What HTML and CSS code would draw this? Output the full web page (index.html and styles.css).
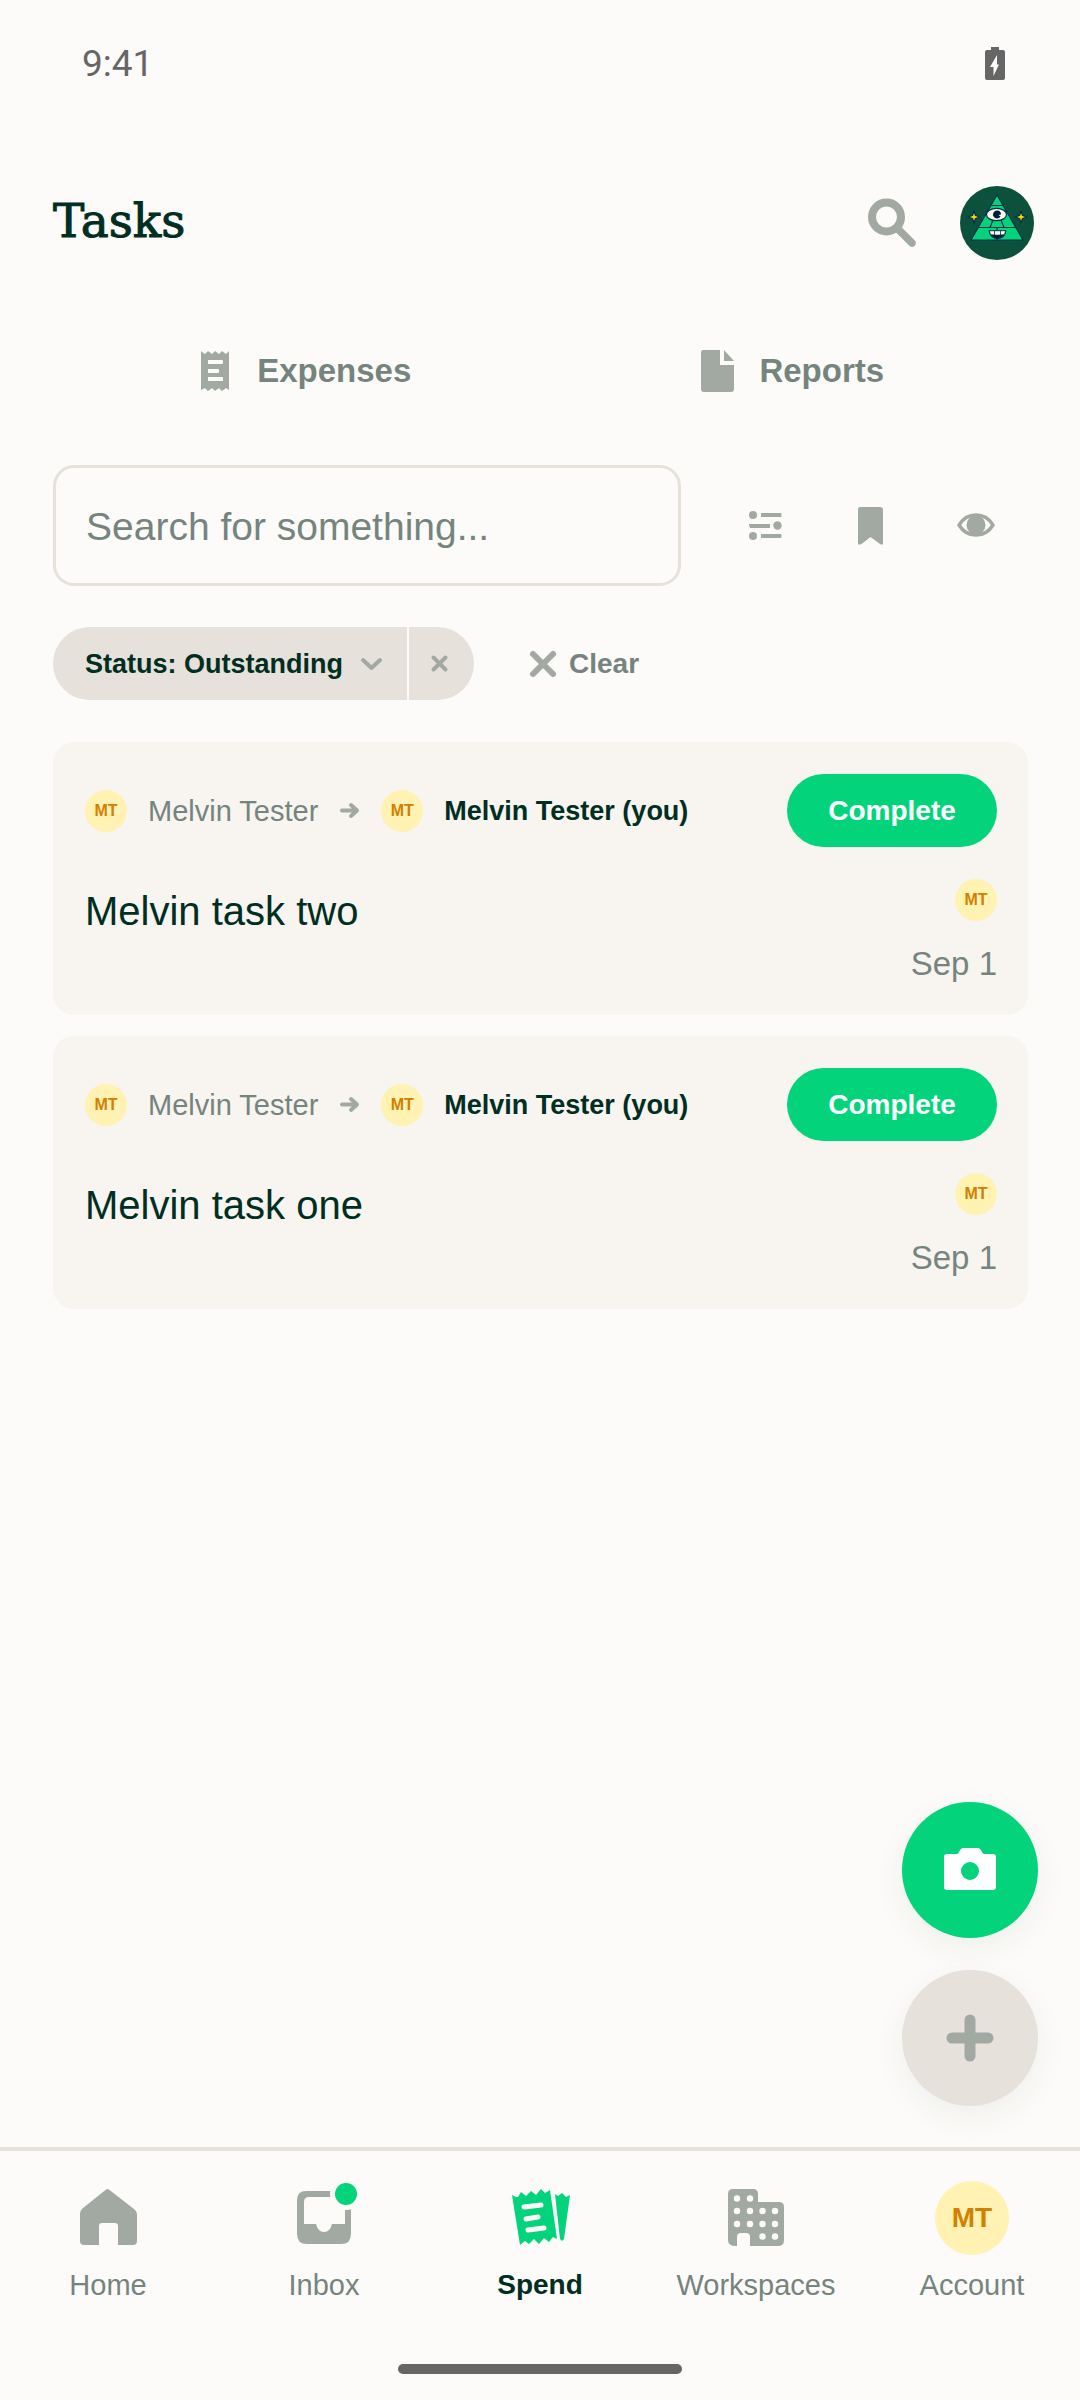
FILE: index.html
```html
<!DOCTYPE html>
<html lang="en">
<head>
<meta charset="utf-8">
<meta name="viewport" content="width=device-width, initial-scale=1">
<title>Tasks</title>
<link rel="stylesheet" href="styles.css">
</head>
<body>
<div class="app">
  <div class="status-bar">
    <span>9:41</span>
    <svg class="battery" width="20" height="34" viewBox="0 0 20 34" aria-hidden="true"><path fill="currentColor" fill-rule="evenodd" d="M6 0h8v3h4q2 0 2 2v26q0 2-2 2H2q-2 0-2-2V5q0-2 2-2h4zM12 8 5 20h3.500v9L14 17.500h-2z"/></svg>
  </div>

  <header class="header">
    <h1>Tasks</h1>
    <div class="header-actions">
      <button class="icon-button" aria-label="Search">
        <svg width="52" height="52" viewBox="0 0 52 52" fill="none" stroke="currentColor"><circle cx="20.500" cy="20" r="14.500" stroke-width="8"/><path d="M31 31 46 46" stroke-width="7.500" stroke-linecap="round"/></svg>
      </button>
      <button class="icon-button" aria-label="Profile">
        <svg width="74" height="74" viewBox="0 0 74 74">
          <circle cx="37" cy="37" r="37" fill="#0b513b"/>
          <g stroke="#002e4d" stroke-linejoin="round">
            <path d="M37 9 63 54H11z" fill="#03d47c" stroke-width="1.200"/>
            <path d="M31.500 19.500h11M19 41.500h36M33 34l-3 7.500M41 34l3 7.500M37 41.500V54" fill="none" stroke-width="1.200"/>
            <ellipse cx="36.500" cy="28.500" rx="10" ry="6.200" fill="#fff8ea" stroke-width="1.200"/>
            <path d="M29 44.500h17q-1 8-8.500 8T29 44.500z" fill="#001e3c" stroke-width="1"/>
            <path d="M29.500 44.800h16l-1 3.800q-7 1-14 0z" fill="#fff8ea" stroke-width=".6"/>
            <path d="M34.500 45v4M40.500 45v4" stroke-width=".8"/>
            <path d="M14 25l1.500 4.500L20 31l-4.500 1.500L14 37l-1.500-4.500L8 31l4.500-1.500zM61 25l1.500 4.500L67 31l-4.500 1.500L61 37l-1.500-4.500L55 31l4.500-1.500z" fill="#fed607" stroke-width="1.200"/>
          </g>
          <path d="M37 24.500a4 4 0 1 0 3.500 6l-2-1.500 2.500-.500a4 4 0 0 0-4-4z" fill="#001e3c"/>
        </svg>
      </button>
    </div>
  </header>

  <nav class="tabs" aria-label="Sections">
    <a href="#expenses" class="tab">
      <svg width="42" height="42" viewBox="0 0 42 42"><path fill="currentColor" fill-rule="evenodd" d="M7 1l1 1 3 2 3-3 4 3 3-3 4 3 3-3 4 3 3-3v39l-3-2-4 3-3-3-4 3-3-3-4 3-3-3-4 2zM14 10v4h14q1 0 1-1v-2q0-1-1-1zM14 19v4h10q1 0 1-1v-2q0-1-1-1zM14 27v4h15v-4z"/></svg>
      <span>Expenses</span>
    </a>
    <a href="#reports" class="tab">
      <svg width="42" height="42" viewBox="0 0 42 42"><path fill="currentColor" d="M7 0h17v15h14v24q0 3-3 3H8q-3 0-3-3V3q0-3 2-3zM28 0l10 11H28z"/></svg>
      <span>Reports</span>
    </a>
  </nav>

  <main class="main">
    <form class="search-row">
      <input class="search" type="text" placeholder="Search for something..." aria-label="Search for something">
      <button type="button" class="tool" aria-label="Filters">
        <svg width="42" height="42" viewBox="0 0 42 42" fill="currentColor"><circle cx="8" cy="10" r="4"/><circle cx="32.500" cy="20.500" r="4.200"/><circle cx="8" cy="31" r="4"/><path d="M16 8h20q1 2 0 4H16zM4 19h21v4H5q-1-2-1-4zM16 29h20q1 2 0 4H16z"/></svg>
      </button>
      <button type="button" class="tool" aria-label="Save search">
        <svg width="42" height="42" viewBox="0 0 42 42" fill="currentColor"><path d="M10 2h20q3 0 3 3v34q-1 1-3 0l-9.500-7-9 7q-3 1-3.500 0V5q0-3 2-3z"/></svg>
      </button>
      <button type="button" class="tool" aria-label="Columns">
        <svg width="42" height="42" viewBox="0 0 42 42"><path d="M4 20Q10 10 21 10T38 20Q32 30 21 30T4 20z" fill="none" stroke="currentColor" stroke-width="3.500" stroke-linejoin="round"/><circle cx="21" cy="20" r="9.500" fill="currentColor"/></svg>
      </button>
    </form>

    <div class="filters">
      <div class="chip">
        <button class="chip-label">Status: Outstanding
          <svg width="21" height="21" viewBox="0 0 21 21" fill="none" stroke="currentColor" stroke-width="4" stroke-linecap="round" stroke-linejoin="round"><path d="M2 7l8.500 8L19 7"/></svg>
        </button>
        <button class="chip-remove" aria-label="Remove filter">
          <svg width="21" height="21" viewBox="0 0 21 21" stroke="currentColor" stroke-width="4" stroke-linecap="round"><path d="M4.500 4.500l12 12M16.500 4.500l-12 12"/></svg>
        </button>
      </div>
      <button class="clear">
        <svg width="32" height="32" viewBox="0 0 32 32" stroke="currentColor" stroke-width="6" stroke-linecap="round"><path d="M6 6l20 20M26 6 6 26"/></svg>
        Clear
      </button>
    </div>

    <ul class="tasks">
      <li class="task">
        <div class="task-head">
          <span class="initials">MT</span>
          <span class="person">Melvin Tester</span>
          <svg class="arrow" width="21" height="21" viewBox="0 0 21 21" fill="none" stroke="currentColor" stroke-width="4" stroke-linecap="round" stroke-linejoin="round"><path d="M3 10.500h14M12 5l6 5.500-6 5.500"/></svg>
          <span class="initials">MT</span>
          <strong class="person">Melvin Tester (you)</strong>
          <button class="complete">Complete</button>
        </div>
        <div class="task-body">
          <h2>Melvin task two</h2>
          <div class="task-meta">
            <span class="initials">MT</span>
            <time>Sep 1</time>
          </div>
        </div>
      </li>
      <li class="task">
        <div class="task-head">
          <span class="initials">MT</span>
          <span class="person">Melvin Tester</span>
          <svg class="arrow" width="21" height="21" viewBox="0 0 21 21" fill="none" stroke="currentColor" stroke-width="4" stroke-linecap="round" stroke-linejoin="round"><path d="M3 10.500h14M12 5l6 5.500-6 5.500"/></svg>
          <span class="initials">MT</span>
          <strong class="person">Melvin Tester (you)</strong>
          <button class="complete">Complete</button>
        </div>
        <div class="task-body">
          <h2>Melvin task one</h2>
          <div class="task-meta">
            <span class="initials">MT</span>
            <time>Sep 1</time>
          </div>
        </div>
      </li>
    </ul>
  </main>

  <div class="bottom">
    <div class="fabs">
      <button class="fab fab-primary" aria-label="Scan receipt">
        <svg width="52" height="52" viewBox="0 0 52 52" fill="currentColor" fill-rule="evenodd"><path d="M3 10h10q1 0 2-2 2-4 4-4h15q2 0 4 4 1 2 2 2h9q3 0 3 3v30q0 3-3 3H3q-3 0-3-3V13q0-3 3-3zM26 18a9 9 0 1 0 0 18 9 9 0 0 0 0-18z"/></svg>
      </button>
      <button class="fab" aria-label="Create">
        <svg width="52" height="52" viewBox="0 0 52 52" stroke="currentColor" stroke-width="11" stroke-linecap="round"><path d="M26 8v36M8 26h36"/></svg>
      </button>
    </div>

    <nav class="nav" aria-label="Main">
      <a href="#home" class="nav-item">
        <span class="nav-icon"><svg width="64" height="64" viewBox="0 0 64 64" fill="currentColor"><path d="M29.500 4q2-2 4 0L58 23q3 2 3 5v27q0 4-4 4H42V40q0-3-3-3H26q-3 0-3 3v19H8q-4 0-4-4V27q0-3 3-5z"/></svg></span>
        <span>Home</span>
      </a>
      <a href="#inbox" class="nav-item">
        <span class="nav-icon"><svg width="64" height="64" viewBox="0 0 64 64"><path fill="currentColor" fill-rule="evenodd" d="M14 5h40q5 0 5 6v37q0 10-10 10H15Q5 58 5 48V14q0-9 9-9zM17 11q-5 0-5 5v22h12q2 8 8 8t8-8h13V11z"/><circle cx="54" cy="8" r="16" fill="#fcfbf9"/><circle cx="54" cy="8" r="11" fill="#03d47c"/></svg></span>
        <span>Inbox</span>
      </a>
      <a href="#spend" class="nav-item active" aria-current="page">
        <span class="nav-icon"><svg width="64" height="64" viewBox="0 0 64 64"><path fill="#03d47c" d="M4 9l4 2 2 0 3-5 5 4 5-5 5 4 5-6 4 4 5-3 7 49-4-2-4 5-5-4-5 6-5-5-5 5-4-3-5 4zM47 8l3 2 4-3 4 4 4-2-6 44-2 2-2-2z"/><path d="M16 21l17-2M18 33l12-2M20 44l16-2" stroke="#fcfbf9" stroke-width="5" stroke-linecap="round"/></svg></span>
        <span>Spend</span>
      </a>
      <a href="#workspaces" class="nav-item">
        <span class="nav-icon"><svg width="64" height="64" viewBox="0 0 64 64"><path fill="currentColor" d="M9 3h20q5 0 5 5v8h21q5 0 5 5v33q0 6-6 6H26V51q0-4-4-4h-5q-4 0-4 4v9h-1q-8 0-8-6V8q0-5 5-5z"/><g fill="#fcfbf9"><circle cx="13" cy="12.500" r="3.200"/><circle cx="26" cy="12.500" r="3.200"/><circle cx="13" cy="25" r="3.200"/><circle cx="26" cy="25" r="3.200"/><circle cx="38.500" cy="25" r="3.200"/><circle cx="51" cy="25" r="3.200"/><circle cx="13" cy="38" r="3.200"/><circle cx="26" cy="38" r="3.200"/><circle cx="38.500" cy="38" r="3.200"/><circle cx="51" cy="38" r="3.200"/><circle cx="38.500" cy="50.500" r="3.200"/><circle cx="51" cy="50.500" r="3.200"/></g></svg></span>
        <span>Workspaces</span>
      </a>
      <a href="#account" class="nav-item">
        <span class="nav-icon"><span class="initials initials-large">MT</span></span>
        <span>Account</span>
      </a>
    </nav>
    <div class="home-indicator"></div>
  </div>
</div>
</body>
</html>
```
FILE: styles.css
```css
:root {
  --bg: #fcfbf9;
  --card: #f8f4f0;
  --border: #e6e1da;
  --text: #002e22;
  --muted: #76847e;
  --icon: #a2a9a3;
  --green: #03d47c;
}

* { box-sizing: border-box; }

body {
  margin: 0;
  background: var(--bg);
  color: var(--text);
  font-family: "Liberation Sans", Arial, sans-serif;
  font-size: 27px;
  line-height: 36px;
}

button {
  margin: 0;
  padding: 0;
  border: 0;
  background: none;
  color: inherit;
  font: inherit;
  cursor: pointer;
}

a { color: inherit; text-decoration: none; }

svg { display: block; flex: none; overflow: visible; }

.app {
  display: flex;
  flex-direction: column;
  min-height: 100vh;
}

.status-bar {
  display: flex;
  align-items: center;
  justify-content: space-between;
  height: 128px;
  padding: 0 75px 0 82px;
  color: #666;
  font-family: Roboto, sans-serif;
  font-size: 37px;
}

.header {
  display: flex;
  align-items: center;
  justify-content: space-between;
  padding: 58px 46px 0 53px;
}

h1 {
  margin: 0;
  padding-bottom: 4px;
  font-family: "DejaVu Serif", serif;
  font-size: 47px;
  line-height: 64px;
  font-weight: 400;
  -webkit-text-stroke: 1px currentColor;
}

.header-actions { display: flex; align-items: center; gap: 42px; }

.icon-button { color: var(--icon); }

.tabs {
  display: flex;
  height: 105px;
  margin: 58px 46px 42px 59px;
}

.tab {
  flex: 1;
  display: flex;
  align-items: center;
  justify-content: center;
  gap: 21px;
  color: var(--icon);
}

.tab span {
  color: var(--muted);
  font-size: 33px;
  font-weight: 700;
}

.main { flex: 1; padding: 0 52px 0 53px; }

.search-row { display: flex; align-items: center; }

.search {
  flex: 1;
  min-width: 0;
  height: 121px;
  margin-right: 32px;
  padding: 2px 30px 0;
  border: 3px solid var(--border);
  border-radius: 21px;
  background: transparent;
  color: var(--text);
  font: inherit;
  font-size: 39px;
}

.search::placeholder { color: var(--muted); opacity: 1; }

.tool {
  display: flex;
  align-items: center;
  justify-content: center;
  width: 105px;
  height: 105px;
  color: var(--icon);
}

.filters {
  display: flex;
  align-items: center;
  gap: 53px;
  margin: 41px 0 42px;
  font-weight: 700;
}

.chip { display: flex; gap: 2px; }

.chip-label,
.chip-remove {
  display: flex;
  align-items: center;
  height: 73px;
  background: var(--border);
}

.chip-label {
  gap: 18px;
  padding: 0 25px 0 32px;
  border-radius: 37px 0 0 37px;
}

.chip-remove {
  padding: 0 24px 0 20px;
  border-radius: 0 37px 37px 0;
}

.chip svg,
.clear svg { color: var(--icon); }

.clear {
  display: flex;
  align-items: center;
  gap: 10px;
  color: var(--muted);
  font-size: 28px;
}

.tasks {
  display: flex;
  flex-direction: column;
  gap: 21px;
  margin: 0;
  padding: 0;
  list-style: none;
}

.task {
  padding: 32px 31px 30px 32px;
  border-radius: 21px;
  background: var(--card);
}

.task-head { display: flex; align-items: center; gap: 21px; }

.person { color: var(--muted); font-size: 29px; }

strong.person { color: var(--text); font-size: 27px; }

.arrow { color: var(--icon); }

.initials {
  flex: none;
  display: flex;
  align-items: center;
  justify-content: center;
  width: 42px;
  height: 42px;
  border-radius: 50%;
  background: #fff2b2;
  color: #d18000;
  font-size: 16px;
  line-height: 20px;
  font-weight: 700;
}

.initials-large {
  width: 74px;
  height: 74px;
  font-size: 28px;
}

.complete {
  width: 210px;
  height: 73px;
  margin-left: auto;
  border-radius: 37px;
  background: var(--green);
  color: #fff;
  font-size: 28px;
  font-weight: 700;
}

.task-body {
  display: flex;
  justify-content: space-between;
  padding-top: 32px;
}

h2 {
  margin: 0;
  font-size: 40px;
  line-height: 64px;
  font-weight: 400;
}

.task-meta {
  display: flex;
  flex-direction: column;
  align-items: flex-end;
  gap: 21px;
  color: var(--muted);
  font-size: 33px;
  line-height: 43px;
}

.bottom { position: relative; }

.fabs {
  position: absolute;
  right: 42px;
  bottom: 100%;
  display: flex;
  flex-direction: column;
  gap: 32px;
  padding-bottom: 41px;
}

.fab {
  display: flex;
  align-items: center;
  justify-content: center;
  width: 136px;
  height: 136px;
  border-radius: 50%;
  background: var(--border);
  box-shadow: 0 10px 32px rgba(0, 46, 34, 0.06);
  color: var(--icon);
}

.fab-primary { background: var(--green); color: #fff; }

.nav {
  display: flex;
  border-top: 4px solid var(--border);
  padding-top: 30px;
}

.nav-item {
  flex: 1;
  display: flex;
  flex-direction: column;
  align-items: center;
  gap: 12px;
  color: var(--muted);
  font-size: 29px;
}

.nav-item.active { color: var(--text); font-size: 28px; font-weight: 700; }

.nav-icon {
  display: flex;
  align-items: center;
  height: 74px;
  color: var(--icon);
}

.home-indicator {
  width: 284px;
  height: 10px;
  margin: 61px auto 26px;
  border-radius: 5px;
  background: #666;
}
```
